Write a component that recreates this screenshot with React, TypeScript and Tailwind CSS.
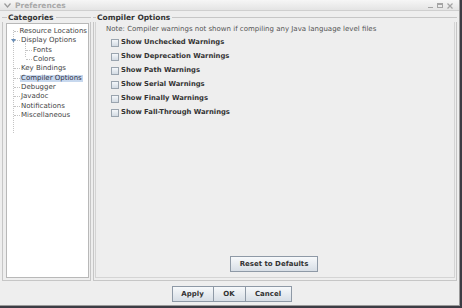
import React from 'react';

const categories = [
  { label: 'Resource Locations', depth: 0 },
  { label: 'Display Options', depth: 0, open: true },
  { label: 'Fonts', depth: 1 },
  { label: 'Colors', depth: 1 },
  { label: 'Key Bindings', depth: 0 },
  { label: 'Compiler Options', depth: 0, selected: true },
  { label: 'Debugger', depth: 0 },
  { label: 'Javadoc', depth: 0 },
  { label: 'Notifications', depth: 0 },
  { label: 'Miscellaneous', depth: 0 },
];

const warnings = [
  'Show Unchecked Warnings',
  'Show Deprecation Warnings',
  'Show Path Warnings',
  'Show Serial Warnings',
  'Show Finally Warnings',
  'Show Fall-Through Warnings',
];

const Btn: React.FC<{ label: string; className?: string }> = ({ label, className = '' }) => (
  <button className={`h-[15px] border border-[#8e99a6] bg-gradient-to-b from-[#f7f9fb] to-[#d7dee6] text-[7px] font-bold text-[#333] flex items-center justify-center ${className}`}>
    {label}
  </button>
);

export default function App() {
  return (
    <div className="w-[462px] h-[308px] bg-[#3c3c44] font-['DejaVu_Sans',sans-serif] text-[#444]">
      <div className="w-[460px] h-[306px] bg-[#eeeeee] border-r border-b border-[#9a9a9a] flex flex-col">
        {/* Title bar */}
        <div className="h-[11px] bg-gradient-to-b from-[#f6f6f6] to-[#e4e4e4] border-b border-[#cfcfcf] flex items-center px-[4px] pt-[1px] text-[#a8a8a8]">
          <svg width="7" height="5" viewBox="0 0 7 5" className="mr-[4px]">
            <path d="M0.5 0.5 L3.5 4 L6.5 0.5" fill="none" stroke="#9a9a9a" strokeWidth="1.2" />
          </svg>
          <span className="text-[7.5px] font-bold leading-none">Preferences</span>
          <div className="ml-auto flex items-center gap-[4px] pr-[2px]">
            <div className="w-[5px] h-[1px] bg-[#a4a4a4] mt-[3px]" />
            <div className="w-[6px] h-[5px] border border-[#a4a4a4] border-t-2" />
            <svg width="6" height="6" viewBox="0 0 6 6">
              <path d="M0.5 0.5 L5.5 5.5 M5.5 0.5 L0.5 5.5" stroke="#a4a4a4" strokeWidth="1.2" />
            </svg>
          </div>
        </div>

        <div className="flex-1 flex flex-col px-[2px] pt-[2px]">
          <div className="flex gap-[2px] h-[268px]">
            {/* Categories */}
            <div className="w-[89px] flex flex-col">
              <div className="flex items-center h-[9px]">
                <div className="w-[5px] h-px bg-[#c6c6c6]" />
                <span className="text-[7.5px] font-bold text-[#333] pl-[1px] pr-[2px] leading-none">Categories</span>
                <div className="flex-1 h-px bg-[#c6c6c6]" />
              </div>
              <div className="flex-1 border-l border-r border-b border-[#c6c6c6] pl-[3px] pr-[1px] pb-[2px] pt-[1px]">
                <div className="h-full bg-white border border-[#b8b8b8] pt-[3px] relative">
                  <div className="absolute left-[6px] top-[6px] h-[103px] border-l border-dotted border-[#c4c4c4]" />
                  <div className="absolute left-[18px] top-[19px] h-[14px] border-l border-dotted border-[#c4c4c4]" />
                  {categories.map((c) => (
                    <div key={c.label} className={`h-[9.3px] flex items-center text-[7px] leading-none whitespace-nowrap ${c.depth ? 'pl-[19px]' : 'pl-[7px]'}`}>
                      <div className="h-px w-[6px] border-t border-dotted border-[#c4c4c4]" />
                      {c.open && (
                        <div className="absolute left-[4px] w-[5px] h-[5px] flex items-center justify-center">
                          <svg width="5" height="5" viewBox="0 0 5 5"><path d="M0 1 L5 1 L2.5 4.5 Z" fill="#6a8fb8" /></svg>
                        </div>
                      )}
                      <span className={`px-[1px] ${c.selected ? 'bg-[#c7d8ee] text-[#334]' : ''}`}>{c.label}</span>
                    </div>
                  ))}
                </div>
              </div>
            </div>

            {/* Compiler options */}
            <div className="flex-1 flex flex-col">
              <div className="flex items-center h-[9px]">
                <div className="w-[3px] h-px bg-[#c6c6c6]" />
                <span className="text-[7.5px] font-bold text-[#333] pl-[1px] pr-[2px] leading-none">Compiler Options</span>
                <div className="flex-1 h-px bg-[#c6c6c6]" />
              </div>
              <div className="flex-1 border-l border-r border-b border-[#c6c6c6] pl-[1px] pr-[1px] pb-[2px] flex flex-col">
                <div className="flex-1 border-l border-r border-b border-[#d4d4d4] flex flex-col pl-[10px] pt-[3px]">
                  <div className="text-[7px] leading-[9px] text-[#555] whitespace-nowrap">
                    Note: Compiler warnings not shown if compiling any Java language level files
                  </div>
                  <div className="flex flex-col pl-[5px] pt-[4px] gap-[5px]">
                    {warnings.map((w) => (
                      <div key={w} className="flex items-center h-[9px] gap-[2px]">
                        <div className="w-[8px] h-[8px] border border-[#9aa4ae] bg-gradient-to-b from-[#f4f7fa] to-[#d3dbe3]" />
                        <span className="text-[6.8px] font-bold text-[#333] leading-none">{w}</span>
                      </div>
                    ))}
                  </div>
                  <div className="mt-auto mb-[5px] flex justify-center pr-[12px]">
                    <Btn label="Reset to Defaults" className="w-[88px] h-[16px]" />
                  </div>
                </div>
              </div>
            </div>
          </div>

          <div className="flex justify-center pt-[5px] pl-[4px]">
            <Btn label="Apply" className="w-[42px] h-[16px]" />
            <Btn label="OK" className="w-[32px] h-[16px] border-l-0" />
            <Btn label="Cancel" className="w-[46px] h-[16px] border-l-0" />
          </div>
        </div>
      </div>
    </div>
  );
}
